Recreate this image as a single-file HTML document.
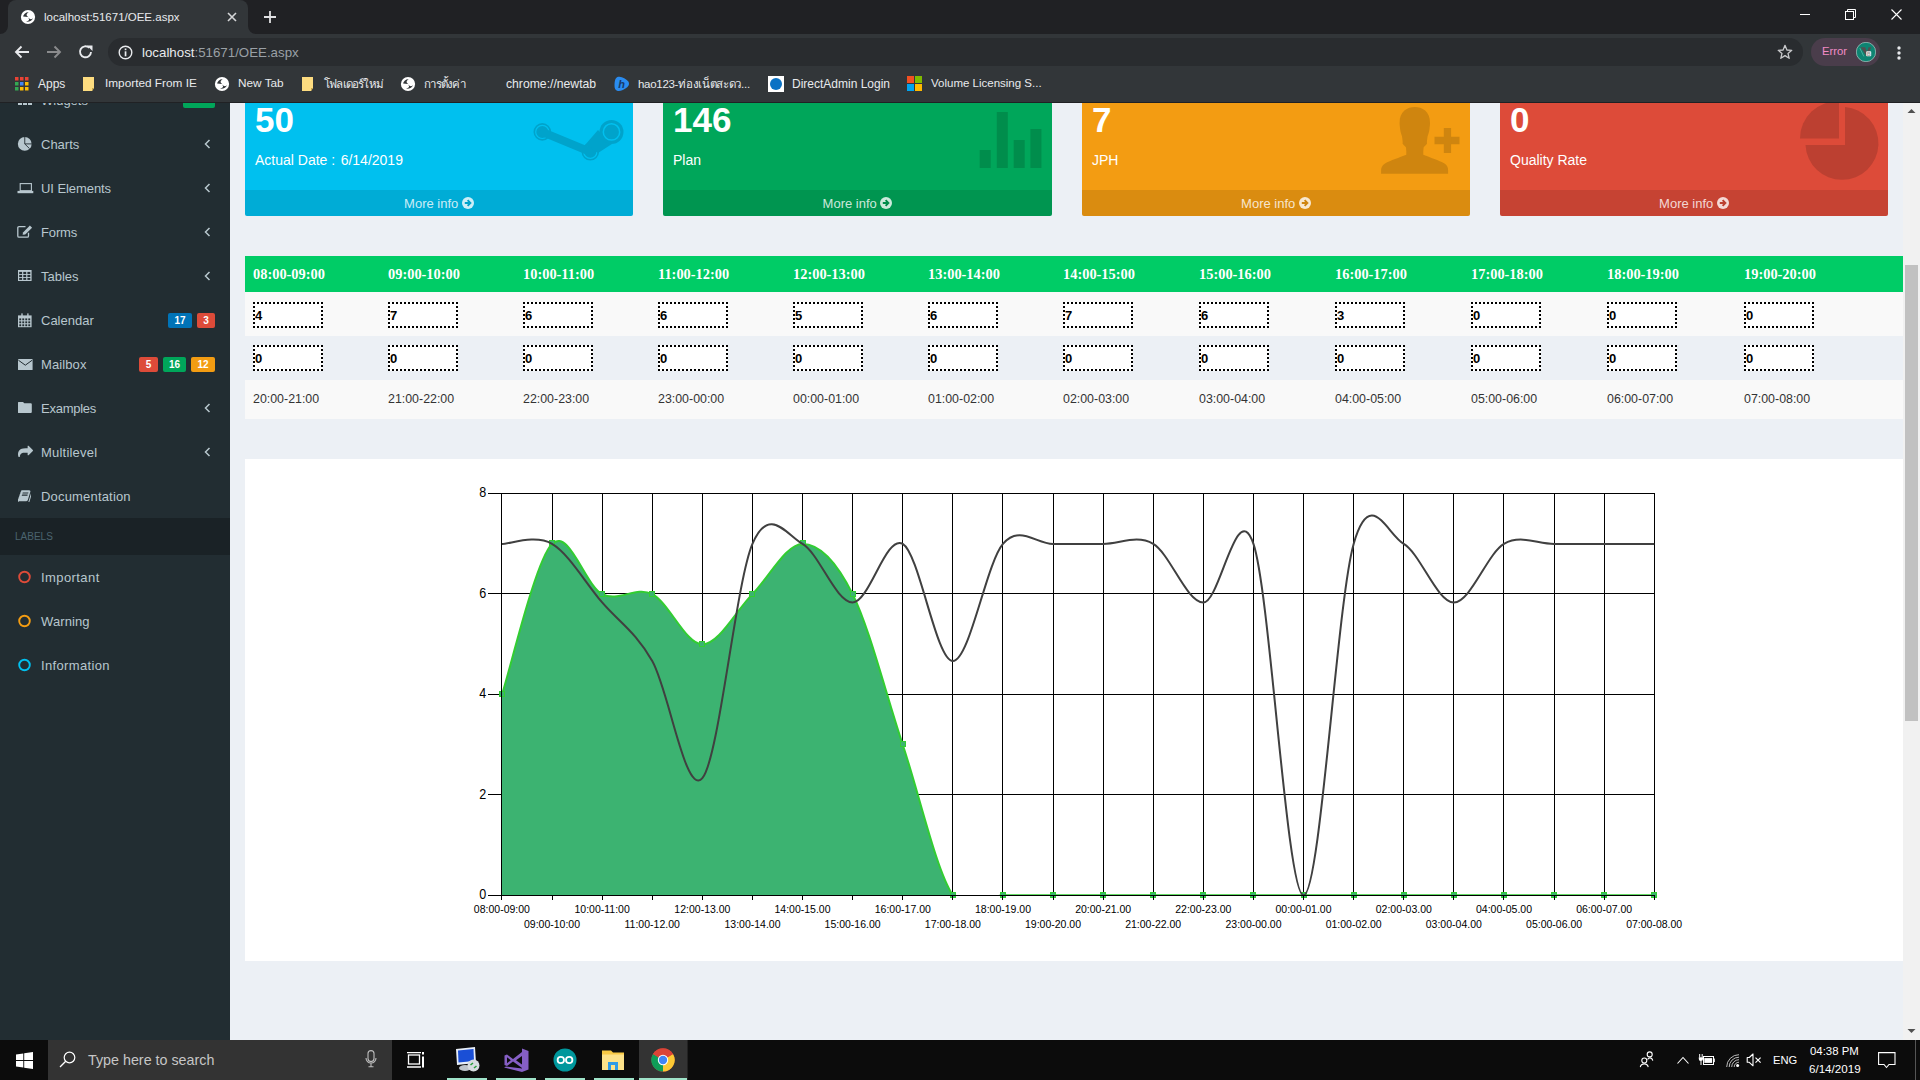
<!DOCTYPE html><html><head><meta charset="utf-8"><title>OEE</title><style>
*{box-sizing:border-box}
html,body{margin:0;padding:0;width:1920px;height:1080px;overflow:hidden;font-family:'Liberation Sans', sans-serif;}
body{position:relative;background:#ecf0f5}
.a{position:absolute}
.t{position:absolute;white-space:nowrap;line-height:1}
</style></head><body><div class="a" style="left:0;top:0;width:1920px;height:34px;background:#202124"></div><div class="a" style="left:0;top:34px;width:1920px;height:68px;background:#323639"></div><div class="a" style="left:0;top:102px;width:1920px;height:1px;background:#202124"></div><div class="a" style="left:8px;top:0;width:240px;height:34px;background:#323639;border-radius:8px 8px 0 0"></div><svg class="a" style="left:0;top:26px" width="8" height="8"><path d="M8 0 A8 8 0 0 1 0 8 L8 8Z" fill="#323639"/></svg><svg class="a" style="left:248px;top:26px" width="8" height="8"><path d="M0 0 A8 8 0 0 0 8 8 L0 8Z" fill="#323639"/></svg><svg class="a" style="left:20px;top:9px" width="16" height="16" viewBox="0 0 16 16"><circle cx="8" cy="8" r="7.1" fill="#ffffff"/><path d="M3.1 7.6 C3.3 5.5 5.2 3.3 8.8 2.9 C7.2 4 6.4 5.2 6.6 6.3 C6.9 7.1 7.6 7.6 8.2 8.1 C6.8 8.2 4.9 7.8 3.1 7.6Z" fill="#323639"/><path d="M6.2 12.7 C9.6 13 12.5 11.5 12.9 8.9 C12.1 10 11.1 10.4 10.2 10.1 C9.3 9.8 8.6 8.9 8.0 8.3 C8.7 9.5 9.4 10.6 9.0 11.1 C8.4 11.8 7.3 12.2 6.2 12.7Z" fill="#323639"/></svg><div class="t" style="left:44px;top:12px;font-size:11.5px;color:#e8eaed">localhost:51671/OEE.aspx</div><svg class="a" style="left:226px;top:11px" width="12" height="12" viewBox="0 0 12 12"><path d="M2 2 L10 10 M10 2 L2 10" stroke="#d5d6d8" stroke-width="1.6"/></svg><svg class="a" style="left:263px;top:10px" width="14" height="14" viewBox="0 0 14 14"><path d="M7 1 V13 M1 7 H13" stroke="#e0e1e3" stroke-width="1.8"/></svg><div class="a" style="left:1800px;top:14px;width:10px;height:1px;background:#fff"></div><svg class="a" style="left:1845px;top:9px" width="12" height="11" viewBox="0 0 12 11"><rect x="0.5" y="2.5" width="8" height="8" fill="none" stroke="#fff"/><path d="M2.5 2.5 V0.5 H10.5 V8.5 H8.5" fill="none" stroke="#fff"/></svg><svg class="a" style="left:1891px;top:9px" width="11" height="11" viewBox="0 0 11 11"><path d="M0.5 0.5 L10.5 10.5 M10.5 0.5 L0.5 10.5" stroke="#fff" stroke-width="1.1"/></svg><svg class="a" style="left:14px;top:45px" width="16" height="14" viewBox="0 0 16 14"><path d="M15 7 H2.5 M7.5 1.5 L2 7 L7.5 12.5" fill="none" stroke="#e8eaed" stroke-width="1.9"/></svg><svg class="a" style="left:46px;top:45px" width="16" height="14" viewBox="0 0 16 14"><path d="M1 7 H13.5 M8.5 1.5 L14 7 L8.5 12.5" fill="none" stroke="#8a8b8d" stroke-width="1.9"/></svg><svg class="a" style="left:78px;top:44px" width="16" height="16" viewBox="0 0 16 16"><path d="M13 8 A5.5 5.5 0 1 1 11.3 3.8" fill="none" stroke="#e8eaed" stroke-width="1.9"/><path d="M9 1.5 H14.5 V7 Z" fill="#e8eaed"/></svg><div class="a" style="left:108px;top:38px;width:1695px;height:28px;border-radius:14px;background:#292c2f"></div><svg class="a" style="left:118px;top:45px" width="15" height="15" viewBox="0 0 15 15"><circle cx="7.5" cy="7.5" r="6.3" fill="none" stroke="#e8eaed" stroke-width="1.4"/><rect x="6.7" y="6.3" width="1.7" height="5" fill="#e8eaed"/><rect x="6.7" y="3.5" width="1.7" height="1.7" fill="#e8eaed"/></svg><div class="t" style="left:142px;top:46px;font-size:13.3px;color:#e8eaed">localhost<span style="color:#9aa0a6">:51671/OEE.aspx</span></div><svg class="a" style="left:1777px;top:44px" width="16" height="16" viewBox="0 0 16 16"><path d="M8 1.3 L9.9 6 L14.8 6.3 L11 9.4 L12.2 14.3 L8 11.6 L3.8 14.3 L5 9.4 L1.2 6.3 L6.1 6Z" fill="none" stroke="#c8c9cb" stroke-width="1.3" stroke-linejoin="round"/></svg><div class="a" style="left:1811px;top:38px;width:69px;height:28px;border-radius:14px;background:#4a3d4b"></div><div class="t" style="left:1822px;top:46px;font-size:11.3px;color:#f28bc6">Error</div><svg class="a" style="left:1856px;top:42px" width="20" height="20" viewBox="0 0 20 20"><circle cx="10" cy="10" r="9.7" fill="#0e8472" stroke="#bfe3da" stroke-width="0.6"/><path d="M4.6 5.2 H9.2 L11 10 L12.6 5.2 H15.4 L10.6 14.5 Z" fill="#505050"/><path d="M3.8 6 L7.8 14.4" stroke="#5fc0ad" stroke-width="0.7"/><rect x="10.2" y="9.2" width="5" height="5" rx="0.8" fill="#f2f2f2"/><text x="12.7" y="13.5" font-size="5" font-family="Liberation Sans" font-weight="bold" text-anchor="middle" fill="#999">B</text></svg><svg class="a" style="left:1895.5px;top:44.5px" width="6" height="16" viewBox="0 0 6 16"><circle cx="3" cy="3" r="1.7" fill="#e8eaed"/><circle cx="3" cy="8" r="1.7" fill="#e8eaed"/><circle cx="3" cy="13" r="1.7" fill="#e8eaed"/></svg><svg class="a" style="left:15px;top:77px" width="14" height="14" viewBox="0 0 14 14"><rect x="0" y="0" width="3.5" height="3.5" fill="#ea4335"/><rect x="5" y="0" width="3.5" height="3.5" fill="#ea4335"/><rect x="10" y="0" width="3.5" height="3.5" fill="#ea4335"/><rect x="0" y="5" width="3.5" height="3.5" fill="#34a853"/><rect x="5" y="5" width="3.5" height="3.5" fill="#4285f4"/><rect x="10" y="5" width="3.5" height="3.5" fill="#fbbc05"/><rect x="0" y="10" width="3.5" height="3.5" fill="#34a853"/><rect x="5" y="10" width="3.5" height="3.5" fill="#fbbc05"/><rect x="10" y="10" width="3.5" height="3.5" fill="#fbbc05"/></svg><div class="t" style="left:38px;top:78px;font-size:12px;color:#e8eaed">Apps</div><svg class="a" style="left:83px;top:77px" width="13" height="14" viewBox="0 0 13 14"><path d="M0 0 H11 V11 L9 14 H0Z" fill="#fddc80"/><path d="M9 14 V11 H11Z" fill="#c9a64a"/></svg><div class="t" style="left:105px;top:78px;font-size:11.8px;color:#e8eaed">Imported From IE</div><svg class="a" style="left:214px;top:76px" width="16" height="16" viewBox="0 0 16 16"><circle cx="8" cy="8" r="7.1" fill="#ffffff"/><path d="M3.1 7.6 C3.3 5.5 5.2 3.3 8.8 2.9 C7.2 4 6.4 5.2 6.6 6.3 C6.9 7.1 7.6 7.6 8.2 8.1 C6.8 8.2 4.9 7.8 3.1 7.6Z" fill="#323639"/><path d="M6.2 12.7 C9.6 13 12.5 11.5 12.9 8.9 C12.1 10 11.1 10.4 10.2 10.1 C9.3 9.8 8.6 8.9 8.0 8.3 C8.7 9.5 9.4 10.6 9.0 11.1 C8.4 11.8 7.3 12.2 6.2 12.7Z" fill="#323639"/></svg><div class="t" style="left:238px;top:78px;font-size:11.8px;color:#e8eaed">New Tab</div><svg class="a" style="left:302px;top:77px" width="13" height="14" viewBox="0 0 13 14"><path d="M0 0 H11 V11 L9 14 H0Z" fill="#fddc80"/><path d="M9 14 V11 H11Z" fill="#c9a64a"/></svg><div class="t" style="left:324px;top:79px;font-size:11.5px;color:#e8eaed;letter-spacing:-0.8px">โฟลเดอร์ใหม่</div><svg class="a" style="left:400px;top:76px" width="16" height="16" viewBox="0 0 16 16"><circle cx="8" cy="8" r="7.1" fill="#ffffff"/><path d="M3.1 7.6 C3.3 5.5 5.2 3.3 8.8 2.9 C7.2 4 6.4 5.2 6.6 6.3 C6.9 7.1 7.6 7.6 8.2 8.1 C6.8 8.2 4.9 7.8 3.1 7.6Z" fill="#323639"/><path d="M6.2 12.7 C9.6 13 12.5 11.5 12.9 8.9 C12.1 10 11.1 10.4 10.2 10.1 C9.3 9.8 8.6 8.9 8.0 8.3 C8.7 9.5 9.4 10.6 9.0 11.1 C8.4 11.8 7.3 12.2 6.2 12.7Z" fill="#323639"/></svg><div class="t" style="left:424px;top:79px;font-size:11.5px;color:#e8eaed;letter-spacing:-0.75px">การตั้งค่า</div><div class="t" style="left:506px;top:78px;font-size:12.2px;color:#e8eaed">chrome://newtab</div><svg class="a" style="left:614px;top:76px" width="16" height="16" viewBox="0 0 16 16"><path d="M4 0.8 C7.5 0 12 2.5 14.2 5.3 C15.6 7.3 15.3 9.6 13.2 11.2 C10.2 13.6 6.5 15.4 3.8 15 C1.2 14.6 0.4 12.2 0.5 9 C0.7 5.5 1 1.6 4 0.8Z" fill="#2a8cf0"/><text x="7.6" y="12.3" font-size="11" font-style="italic" font-weight="bold" font-family="Liberation Sans" fill="#183a6a" text-anchor="middle">h</text></svg><div class="t" style="left:638px;top:79px;font-size:11.5px;color:#e8eaed;letter-spacing:-0.3px">hao123-ท่องเน็ตสะดว...</div><svg class="a" style="left:768px;top:76px" width="16" height="16" viewBox="0 0 16 16"><rect width="16" height="16" fill="#fff"/><circle cx="8" cy="8" r="6" fill="#0b72c4"/></svg><div class="t" style="left:792px;top:78px;font-size:12px;color:#e8eaed">DirectAdmin Login</div><svg class="a" style="left:907px;top:76px" width="15" height="15" viewBox="0 0 15 15"><rect x="0" y="0" width="7" height="7" fill="#f25022"/><rect x="8" y="0" width="7" height="7" fill="#7fba00"/><rect x="0" y="8" width="7" height="7" fill="#00a4ef"/><rect x="8" y="8" width="7" height="7" fill="#ffb900"/></svg><div class="t" style="left:931px;top:78px;font-size:11.5px;color:#e8eaed">Volume Licensing S...</div><div class="a" style="left:0;top:103px;width:1920px;height:937px;overflow:hidden" id="vp"><div class="a" style="left:0;top:0;width:230px;height:937px;background:#222d32"></div><div class="t" style="left:41px;top:-9.5px;font-size:13px;color:#b8c7ce;letter-spacing:0px">Widgets</div><svg class="a" style="left:18px;top:-10px" width="14" height="14" viewBox="0 0 14 14"><rect x="0" y="0" width="4" height="3" fill="#b8c7ce"/><rect x="5" y="0" width="4" height="3" fill="#b8c7ce"/><rect x="10" y="0" width="4" height="3" fill="#b8c7ce"/><rect x="0" y="4.5" width="4" height="3" fill="#b8c7ce"/><rect x="5" y="4.5" width="4" height="3" fill="#b8c7ce"/><rect x="10" y="4.5" width="4" height="3" fill="#b8c7ce"/><rect x="0" y="9" width="4" height="3" fill="#b8c7ce"/><rect x="5" y="9" width="4" height="3" fill="#b8c7ce"/><rect x="10" y="9" width="4" height="3" fill="#b8c7ce"/></svg><div class="a" style="left:183px;top:-10px;width:32px;height:15px;border-radius:2px;background:#00a65a;color:#fff;font:bold 10px 'Liberation Sans', sans-serif;line-height:15px;text-align:center"></div><div class="t" style="left:41px;top:34.5px;font-size:13px;color:#b8c7ce;letter-spacing:0px">Charts</div><svg class="a" style="left:17px;top:33px" width="16" height="16" viewBox="0 0 16 16"><circle cx="7.75" cy="7.9" r="6.9" fill="#b8c7ce"/><path d="M7.75 7.9 V0.5 M7.75 7.9 H15 M7.75 7.9 L12.6 12.7" stroke="#222d32" stroke-width="0.9" fill="none"/></svg><svg class="a" style="left:204px;top:36px" width="7" height="10" viewBox="0 0 7 10"><path d="M5.5 1 L1.5 5 L5.5 9" fill="none" stroke="#b8c7ce" stroke-width="1.5"/></svg><div class="t" style="left:41px;top:78.5px;font-size:13px;color:#b8c7ce;letter-spacing:-0.07px">UI Elements</div><svg class="a" style="left:17px;top:78px" width="17" height="14" viewBox="0 0 17 14"><rect x="3.2" y="2.6" width="11.2" height="7.1" fill="none" stroke="#b8c7ce" stroke-width="1.1"/><rect x="0.5" y="9.9" width="15.8" height="2.3" fill="#b8c7ce"/></svg><svg class="a" style="left:204px;top:80px" width="7" height="10" viewBox="0 0 7 10"><path d="M5.5 1 L1.5 5 L5.5 9" fill="none" stroke="#b8c7ce" stroke-width="1.5"/></svg><div class="t" style="left:41px;top:122.5px;font-size:13px;color:#b8c7ce;letter-spacing:-0.14px">Forms</div><svg class="a" style="left:17px;top:122px" width="16" height="14" viewBox="0 0 16 14"><path d="M8.5 1.6 H2 A1.2 1.2 0 0 0 0.8 2.8 V11 A1.2 1.2 0 0 0 2 12.2 H10.3 A1.2 1.2 0 0 0 11.5 11 V7.8" fill="none" stroke="#b8c7ce" stroke-width="1.3"/><path d="M5.6 9.7 L6 7.4 L12.9 0.5 L15.1 2.7 L8.2 9.4Z" fill="#b8c7ce"/></svg><svg class="a" style="left:204px;top:124px" width="7" height="10" viewBox="0 0 7 10"><path d="M5.5 1 L1.5 5 L5.5 9" fill="none" stroke="#b8c7ce" stroke-width="1.5"/></svg><div class="t" style="left:41px;top:166.5px;font-size:13px;color:#b8c7ce;letter-spacing:0px">Tables</div><svg class="a" style="left:18px;top:167px" width="14" height="12" viewBox="0 0 14 12"><rect x="0" y="0" width="13.6" height="11" fill="#b8c7ce"/><rect x="1.2" y="1.9" width="2.9" height="2.2" fill="#222d32"/><rect x="5.3" y="1.9" width="2.9" height="2.2" fill="#222d32"/><rect x="9.4" y="1.9" width="2.9" height="2.2" fill="#222d32"/><rect x="1.2" y="5.0" width="2.9" height="2.0" fill="#222d32"/><rect x="5.3" y="5.0" width="2.9" height="2.0" fill="#222d32"/><rect x="9.4" y="5.0" width="2.9" height="2.0" fill="#222d32"/><rect x="1.2" y="7.9" width="2.9" height="2.0" fill="#222d32"/><rect x="5.3" y="7.9" width="2.9" height="2.0" fill="#222d32"/><rect x="9.4" y="7.9" width="2.9" height="2.0" fill="#222d32"/></svg><svg class="a" style="left:204px;top:168px" width="7" height="10" viewBox="0 0 7 10"><path d="M5.5 1 L1.5 5 L5.5 9" fill="none" stroke="#b8c7ce" stroke-width="1.5"/></svg><div class="t" style="left:41px;top:210.5px;font-size:13px;color:#b8c7ce;letter-spacing:0px">Calendar</div><svg class="a" style="left:18px;top:210px" width="14" height="15" viewBox="0 0 14 15"><rect x="0" y="2.4" width="13.6" height="11.8" fill="#b8c7ce"/><rect x="1.3" y="5.4" width="1.9" height="1.9" fill="#222d32"/><rect x="4.3" y="5.4" width="1.9" height="1.9" fill="#222d32"/><rect x="7.3" y="5.4" width="1.9" height="1.9" fill="#222d32"/><rect x="10.3" y="5.4" width="1.9" height="1.9" fill="#222d32"/><rect x="1.3" y="8.350000000000001" width="1.9" height="1.9" fill="#222d32"/><rect x="4.3" y="8.350000000000001" width="1.9" height="1.9" fill="#222d32"/><rect x="7.3" y="8.350000000000001" width="1.9" height="1.9" fill="#222d32"/><rect x="10.3" y="8.350000000000001" width="1.9" height="1.9" fill="#222d32"/><rect x="1.3" y="11.3" width="1.9" height="1.9" fill="#222d32"/><rect x="4.3" y="11.3" width="1.9" height="1.9" fill="#222d32"/><rect x="7.3" y="11.3" width="1.9" height="1.9" fill="#222d32"/><rect x="10.3" y="11.3" width="1.9" height="1.9" fill="#222d32"/><rect x="3.3" y="0.2" width="1.4" height="3.4" rx="0.6" fill="#b8c7ce"/><rect x="9.2" y="0.2" width="1.4" height="3.4" rx="0.6" fill="#b8c7ce"/></svg><div class="a" style="left:168px;top:210px;width:24px;height:15px;border-radius:2px;background:#0073b7;color:#fff;font:bold 10px 'Liberation Sans', sans-serif;line-height:15px;text-align:center">17</div><div class="a" style="left:197px;top:210px;width:18px;height:15px;border-radius:2px;background:#dd4b39;color:#fff;font:bold 10px 'Liberation Sans', sans-serif;line-height:15px;text-align:center">3</div><div class="t" style="left:41px;top:254.5px;font-size:13px;color:#b8c7ce;letter-spacing:0.11px">Mailbox</div><svg class="a" style="left:18px;top:254px" width="15" height="14" viewBox="0 0 15 14"><rect x="0" y="2" width="14.6" height="11" rx="0.6" fill="#b8c7ce"/><path d="M0.4 3.2 L7.3 8.2 L14.2 3.2" fill="none" stroke="#222d32" stroke-width="1"/></svg><div class="a" style="left:139px;top:254px;width:19px;height:15px;border-radius:2px;background:#dd4b39;color:#fff;font:bold 10px 'Liberation Sans', sans-serif;line-height:15px;text-align:center">5</div><div class="a" style="left:163px;top:254px;width:23px;height:15px;border-radius:2px;background:#00a65a;color:#fff;font:bold 10px 'Liberation Sans', sans-serif;line-height:15px;text-align:center">16</div><div class="a" style="left:191px;top:254px;width:24px;height:15px;border-radius:2px;background:#f39c12;color:#fff;font:bold 10px 'Liberation Sans', sans-serif;line-height:15px;text-align:center">12</div><div class="t" style="left:41px;top:298.5px;font-size:13px;color:#b8c7ce;letter-spacing:-0.25px">Examples</div><svg class="a" style="left:18px;top:298px" width="14" height="14" viewBox="0 0 14 14"><path d="M-0.2 1.9 A1 1 0 0 1 0.8 0.9 H5 L6.3 2.3 H12.8 A1 1 0 0 1 13.8 3.3 V11.1 A1 1 0 0 1 12.8 12.1 H0.8 A1 1 0 0 1 -0.2 11.1Z" fill="#b8c7ce"/></svg><svg class="a" style="left:204px;top:300px" width="7" height="10" viewBox="0 0 7 10"><path d="M5.5 1 L1.5 5 L5.5 9" fill="none" stroke="#b8c7ce" stroke-width="1.5"/></svg><div class="t" style="left:41px;top:342.5px;font-size:13px;color:#b8c7ce;letter-spacing:0.21px">Multilevel</div><svg class="a" style="left:17.5px;top:341px" width="15" height="13" viewBox="0 0 1792 1536"><path transform="translate(0,1408) scale(1,-1)" d="M1792 640q0 26-19 45l-512 512q-19 19-45 19t-45-19-19-45v-256h-224q-713 0-875-403-53-134-53-333 0-166 127-451 3-7 10.5-24t13.5-30 13-22q12-17 28-17 15 0 23.5 10t8.5 25q0 9-2.5 26.5t-2.5 23.5q-5 68-5 123 0 101 17.5 181t48.5 138.5 80 101 105.5 69.5 133 42.5 154 21.5 175.5 6h224v-256q0-26 19-45t45-19 45 19l512 512q19 19 19 45z" fill="#b8c7ce"/></svg><svg class="a" style="left:204px;top:344px" width="7" height="10" viewBox="0 0 7 10"><path d="M5.5 1 L1.5 5 L5.5 9" fill="none" stroke="#b8c7ce" stroke-width="1.5"/></svg><div class="t" style="left:41px;top:386.5px;font-size:13px;color:#b8c7ce;letter-spacing:0.18px">Documentation</div><svg class="a" style="left:18px;top:386.6px" width="13.3" height="12.4" viewBox="50 100 1560 1450"><path fill="#b8c7ce" d="M1639 478q40 57 18 129l-275 906q-19 64-76.5 107.5t-122.5 43.5h-923q-77 0-148.5-53.5t-99.5-131.5q-24-67-2-127 0-4 3-27t4-37q1-8-3-21.5t-3-19.5q2-11 8-21t16.5-23.5 16.5-23.5q23-38 45-91.5t30-91.5q3-10 .5-30t-.5-28q3-11 17-28t17-23q21-36 42-92t25-90q1-9-2.5-32t.5-28q4-13 22-30.5t22-22.5q19-26 42.5-84.5t27.5-96.5q1-8-3-25.5t-2-26.5q2-8 9-18t18-23 17-21q8-12 16.5-30.5t15-35 16-36 19.5-32 26.5-23.5 36-11.5 47.5 5.5l-1 3q38-9 51-9h761q74 0 114 56t18 130l-274 906q-36 119-71.5 153.5t-128.5 34.5h-869q-27 0-38 15-11 16-1 43 24 70 144 70h923q29 0 56-15.5t35-41.5l300-987q7-22 5-57 38 15 59 43zm-1064 2q-4 13 2 22.5t20 9.5h608q13 0 25.5-9.5t16.5-22.5l21-64q4-13-2-22.5t-20-9.5h-608q-13 0-25.5 9.5t-16.5 22.5zm-83 256q-4 13 2 22.5t20 9.5h608q13 0 25.5-9.5t16.5-22.5l21-64q4-13-2-22.5t-20-9.5h-608q-13 0-25.5 9.5t-16.5 22.5z"/></svg><div class="a" style="left:0;top:415px;width:230px;height:37px;background:#1a2226"></div><div class="t" style="left:15px;top:429px;font-size:10px;color:#4b646f">LABELS</div><div class="t" style="left:41px;top:467.5px;font-size:13px;color:#b8c7ce;letter-spacing:0.42px">Important</div><svg class="a" style="left:18px;top:467px" width="14" height="14" viewBox="0 0 14 14"><circle cx="6.5" cy="7" r="5.3" fill="none" stroke="#dd4b39" stroke-width="1.9"/></svg><div class="t" style="left:41px;top:511.5px;font-size:13px;color:#b8c7ce;letter-spacing:0.1px">Warning</div><svg class="a" style="left:18px;top:511px" width="14" height="14" viewBox="0 0 14 14"><circle cx="6.5" cy="7" r="5.3" fill="none" stroke="#f39c12" stroke-width="1.9"/></svg><div class="t" style="left:41px;top:555.5px;font-size:13px;color:#b8c7ce;letter-spacing:0.34px">Information</div><svg class="a" style="left:18px;top:555px" width="14" height="14" viewBox="0 0 14 14"><circle cx="6.5" cy="7" r="5.3" fill="none" stroke="#00c0ef" stroke-width="1.9"/></svg><div class="a" style="left:1903px;top:0;width:17px;height:937px;background:#f1f1f1"></div><svg class="a" style="left:1907px;top:5px" width="9" height="6" viewBox="0 0 9 6"><path d="M0.5 5 L4.5 1 L8.5 5Z" fill="#505050"/></svg><svg class="a" style="left:1907px;top:925px" width="9" height="6" viewBox="0 0 9 6"><path d="M0.5 1 L4.5 5 L8.5 1Z" fill="#505050"/></svg><div class="a" style="left:1905px;top:162px;width:13px;height:456px;background:#c1c1c1"></div><div class="a" style="left:245px;top:-6px;width:388px;height:119px;background:#00c0ef;border-radius:2px;overflow:hidden"><svg class="a" style="left:285px;top:20px" width="96" height="47" viewBox="0 0 96 47"><circle cx="12.3" cy="14.9" r="8.8" fill="#00a3cb"/><circle cx="12.3" cy="14.9" r="6.6" fill="none" stroke="#00c0ef" stroke-width="1.2"/><circle cx="60.3" cy="34.8" r="8.8" fill="#00a3cb"/><circle cx="60.3" cy="34.8" r="6.6" fill="none" stroke="#00c0ef" stroke-width="1.2"/><path d="M55 28 L68 13 L82 27 L68 36Z" fill="#00a3cb"/><circle cx="81.5" cy="14.9" r="12" fill="#00a3cb"/><circle cx="81.5" cy="14.9" r="8.2" fill="none" stroke="#00c0ef" stroke-width="1.5"/><path d="M13.5 15.5 L59.5 34.5" stroke="#00a3cb" stroke-width="8" stroke-linecap="round"/></svg><div class="t" style="left:10px;top:5px;font:bold 35px 'Liberation Sans', sans-serif;color:#fff;line-height:35px">50</div><div class="t" style="left:10px;top:55.5px;font-size:14px;color:#fff">Actual Date :<span style="margin-left:5.5px"></span>6/14/2019</div><div class="a" style="left:0;top:93px;width:388px;height:26px;background:rgba(0,0,0,0.1)"></div><div class="t" style="left:0;top:99.5px;width:388px;text-align:center;font-size:13px;color:rgba(255,255,255,0.8)">More info <svg width="12" height="12" viewBox="0 0 12 12" style="vertical-align:-1px"><circle cx="6" cy="6" r="6" fill="rgba(255,255,255,0.8)"/><path d="M2.8 6 H8.2 M5.6 3.2 L8.4 6 L5.6 8.8" fill="none" stroke="#00a3cb" stroke-width="1.9"/></svg></div></div><div class="a" style="left:663px;top:-6px;width:389px;height:119px;background:#00a65a;border-radius:2px;overflow:hidden"><svg class="a" style="left:316px;top:14px" width="63" height="58" viewBox="0 0 63 58"><rect x="0.7" y="39" width="11" height="18" fill="#008d4c"/><rect x="17.8" y="1" width="11" height="56" fill="#008d4c"/><rect x="34.7" y="29" width="11" height="28" fill="#008d4c"/><rect x="51.4" y="18" width="11" height="39" fill="#008d4c"/></svg><div class="t" style="left:10px;top:5px;font:bold 35px 'Liberation Sans', sans-serif;color:#fff;line-height:35px">146</div><div class="t" style="left:10px;top:55.5px;font-size:14px;color:#fff">Plan</div><div class="a" style="left:0;top:93px;width:389px;height:26px;background:rgba(0,0,0,0.1)"></div><div class="t" style="left:0;top:99.5px;width:389px;text-align:center;font-size:13px;color:rgba(255,255,255,0.8)">More info <svg width="12" height="12" viewBox="0 0 12 12" style="vertical-align:-1px"><circle cx="6" cy="6" r="6" fill="rgba(255,255,255,0.8)"/><path d="M2.8 6 H8.2 M5.6 3.2 L8.4 6 L5.6 8.8" fill="none" stroke="#008d4c" stroke-width="1.9"/></svg></div></div><div class="a" style="left:1082px;top:-6px;width:388px;height:119px;background:#f39c12;border-radius:2px;overflow:hidden"><svg class="a" style="left:299px;top:9px" width="80" height="70" viewBox="0 0 80 70"><path d="M33.8 1 C41 1 49.2 5 49 17 C49 19.5 48.6 21 48.5 22.9 C48.2 25.5 47.2 28.5 46.6 30.3 C46.2 33.5 45.7 36 46 37.7 C44.5 39.5 43 40.5 42.6 41.4 C42.2 44 42.3 46.5 42.3 48.8 C49 51.5 58 54.5 63.5 57.5 C66.5 59.5 67.1 62 67.1 64 V67.7 H0.1 V64 C0.1 62 1 59.5 4 57.5 C9.5 54.5 18.5 51.5 25.3 48.8 C25.3 46.5 25.4 44 25 41.4 C24.6 40.5 23.1 39.5 21.6 37.7 C21.9 36 21.4 33.5 21 30.3 C20.4 28.5 19.4 25.5 19.1 22.9 C19 21 18.6 19.5 18.6 17 C18.4 5 26.6 1 33.8 1Z" fill="#cf850f"/><rect x="53.5" y="30.75" width="25" height="7.5" fill="#cf850f"/><rect x="62.8" y="22" width="7.3" height="25" fill="#cf850f"/></svg><div class="t" style="left:10px;top:5px;font:bold 35px 'Liberation Sans', sans-serif;color:#fff;line-height:35px">7</div><div class="t" style="left:10px;top:55.5px;font-size:14px;color:#fff">JPH</div><div class="a" style="left:0;top:93px;width:388px;height:26px;background:rgba(0,0,0,0.1)"></div><div class="t" style="left:0;top:99.5px;width:388px;text-align:center;font-size:13px;color:rgba(255,255,255,0.8)">More info <svg width="12" height="12" viewBox="0 0 12 12" style="vertical-align:-1px"><circle cx="6" cy="6" r="6" fill="rgba(255,255,255,0.8)"/><path d="M2.8 6 H8.2 M5.6 3.2 L8.4 6 L5.6 8.8" fill="none" stroke="#cf850f" stroke-width="1.9"/></svg></div></div><div class="a" style="left:1500px;top:-6px;width:388px;height:119px;background:#dd4b39;border-radius:2px;overflow:hidden"><svg class="a" style="left:295px;top:1px" width="90" height="85" viewBox="0 0 90 85"><path d="M44 3.5 A37 37 0 0 0 5 40.5 L44 40.5Z" fill="#bc4031"/><path d="M50 9 A36.5 36.5 0 1 1 10.5 47 L50 47Z" fill="#bc4031"/></svg><div class="t" style="left:10px;top:5px;font:bold 35px 'Liberation Sans', sans-serif;color:#fff;line-height:35px">0</div><div class="t" style="left:10px;top:55.5px;font-size:14px;color:#fff">Quality Rate</div><div class="a" style="left:0;top:93px;width:388px;height:26px;background:rgba(0,0,0,0.1)"></div><div class="t" style="left:0;top:99.5px;width:388px;text-align:center;font-size:13px;color:rgba(255,255,255,0.8)">More info <svg width="12" height="12" viewBox="0 0 12 12" style="vertical-align:-1px"><circle cx="6" cy="6" r="6" fill="rgba(255,255,255,0.8)"/><path d="M2.8 6 H8.2 M5.6 3.2 L8.4 6 L5.6 8.8" fill="none" stroke="#bc4031" stroke-width="1.9"/></svg></div></div><div class="a" style="left:245px;top:153px;width:1658px;height:36px;background:#00cc66"></div><div class="a" style="left:245px;top:189px;width:1658px;height:44px;background:#f9f9f9"></div><div class="a" style="left:245px;top:277px;width:1658px;height:39px;background:#f9f9f9"></div><div class="t" style="left:253px;top:163px;font:bold 14.4px 'Liberation Serif', serif;color:#fff">08:00-09:00</div><div class="a" style="left:253px;top:199px;width:70px;height:26px;border:2px dotted #000;background:#fff"></div><div class="t" style="left:255px;top:204.8px;font:bold 13px 'Liberation Sans', sans-serif;color:#000">4</div><div class="a" style="left:253px;top:242px;width:70px;height:26px;border:2px dotted #000;background:#fff"></div><div class="t" style="left:255px;top:247.8px;font:bold 13px 'Liberation Sans', sans-serif;color:#000">0</div><div class="t" style="left:253px;top:290px;font-size:12.4px;color:#333">20:00-21:00</div><div class="t" style="left:388px;top:163px;font:bold 14.4px 'Liberation Serif', serif;color:#fff">09:00-10:00</div><div class="a" style="left:388px;top:199px;width:70px;height:26px;border:2px dotted #000;background:#fff"></div><div class="t" style="left:390px;top:204.8px;font:bold 13px 'Liberation Sans', sans-serif;color:#000">7</div><div class="a" style="left:388px;top:242px;width:70px;height:26px;border:2px dotted #000;background:#fff"></div><div class="t" style="left:390px;top:247.8px;font:bold 13px 'Liberation Sans', sans-serif;color:#000">0</div><div class="t" style="left:388px;top:290px;font-size:12.4px;color:#333">21:00-22:00</div><div class="t" style="left:523px;top:163px;font:bold 14.4px 'Liberation Serif', serif;color:#fff">10:00-11:00</div><div class="a" style="left:523px;top:199px;width:70px;height:26px;border:2px dotted #000;background:#fff"></div><div class="t" style="left:525px;top:204.8px;font:bold 13px 'Liberation Sans', sans-serif;color:#000">6</div><div class="a" style="left:523px;top:242px;width:70px;height:26px;border:2px dotted #000;background:#fff"></div><div class="t" style="left:525px;top:247.8px;font:bold 13px 'Liberation Sans', sans-serif;color:#000">0</div><div class="t" style="left:523px;top:290px;font-size:12.4px;color:#333">22:00-23:00</div><div class="t" style="left:658px;top:163px;font:bold 14.4px 'Liberation Serif', serif;color:#fff">11:00-12:00</div><div class="a" style="left:658px;top:199px;width:70px;height:26px;border:2px dotted #000;background:#fff"></div><div class="t" style="left:660px;top:204.8px;font:bold 13px 'Liberation Sans', sans-serif;color:#000">6</div><div class="a" style="left:658px;top:242px;width:70px;height:26px;border:2px dotted #000;background:#fff"></div><div class="t" style="left:660px;top:247.8px;font:bold 13px 'Liberation Sans', sans-serif;color:#000">0</div><div class="t" style="left:658px;top:290px;font-size:12.4px;color:#333">23:00-00:00</div><div class="t" style="left:793px;top:163px;font:bold 14.4px 'Liberation Serif', serif;color:#fff">12:00-13:00</div><div class="a" style="left:793px;top:199px;width:70px;height:26px;border:2px dotted #000;background:#fff"></div><div class="t" style="left:795px;top:204.8px;font:bold 13px 'Liberation Sans', sans-serif;color:#000">5</div><div class="a" style="left:793px;top:242px;width:70px;height:26px;border:2px dotted #000;background:#fff"></div><div class="t" style="left:795px;top:247.8px;font:bold 13px 'Liberation Sans', sans-serif;color:#000">0</div><div class="t" style="left:793px;top:290px;font-size:12.4px;color:#333">00:00-01:00</div><div class="t" style="left:928px;top:163px;font:bold 14.4px 'Liberation Serif', serif;color:#fff">13:00-14:00</div><div class="a" style="left:928px;top:199px;width:70px;height:26px;border:2px dotted #000;background:#fff"></div><div class="t" style="left:930px;top:204.8px;font:bold 13px 'Liberation Sans', sans-serif;color:#000">6</div><div class="a" style="left:928px;top:242px;width:70px;height:26px;border:2px dotted #000;background:#fff"></div><div class="t" style="left:930px;top:247.8px;font:bold 13px 'Liberation Sans', sans-serif;color:#000">0</div><div class="t" style="left:928px;top:290px;font-size:12.4px;color:#333">01:00-02:00</div><div class="t" style="left:1063px;top:163px;font:bold 14.4px 'Liberation Serif', serif;color:#fff">14:00-15:00</div><div class="a" style="left:1063px;top:199px;width:70px;height:26px;border:2px dotted #000;background:#fff"></div><div class="t" style="left:1065px;top:204.8px;font:bold 13px 'Liberation Sans', sans-serif;color:#000">7</div><div class="a" style="left:1063px;top:242px;width:70px;height:26px;border:2px dotted #000;background:#fff"></div><div class="t" style="left:1065px;top:247.8px;font:bold 13px 'Liberation Sans', sans-serif;color:#000">0</div><div class="t" style="left:1063px;top:290px;font-size:12.4px;color:#333">02:00-03:00</div><div class="t" style="left:1199px;top:163px;font:bold 14.4px 'Liberation Serif', serif;color:#fff">15:00-16:00</div><div class="a" style="left:1199px;top:199px;width:70px;height:26px;border:2px dotted #000;background:#fff"></div><div class="t" style="left:1201px;top:204.8px;font:bold 13px 'Liberation Sans', sans-serif;color:#000">6</div><div class="a" style="left:1199px;top:242px;width:70px;height:26px;border:2px dotted #000;background:#fff"></div><div class="t" style="left:1201px;top:247.8px;font:bold 13px 'Liberation Sans', sans-serif;color:#000">0</div><div class="t" style="left:1199px;top:290px;font-size:12.4px;color:#333">03:00-04:00</div><div class="t" style="left:1335px;top:163px;font:bold 14.4px 'Liberation Serif', serif;color:#fff">16:00-17:00</div><div class="a" style="left:1335px;top:199px;width:70px;height:26px;border:2px dotted #000;background:#fff"></div><div class="t" style="left:1337px;top:204.8px;font:bold 13px 'Liberation Sans', sans-serif;color:#000">3</div><div class="a" style="left:1335px;top:242px;width:70px;height:26px;border:2px dotted #000;background:#fff"></div><div class="t" style="left:1337px;top:247.8px;font:bold 13px 'Liberation Sans', sans-serif;color:#000">0</div><div class="t" style="left:1335px;top:290px;font-size:12.4px;color:#333">04:00-05:00</div><div class="t" style="left:1471px;top:163px;font:bold 14.4px 'Liberation Serif', serif;color:#fff">17:00-18:00</div><div class="a" style="left:1471px;top:199px;width:70px;height:26px;border:2px dotted #000;background:#fff"></div><div class="t" style="left:1473px;top:204.8px;font:bold 13px 'Liberation Sans', sans-serif;color:#000">0</div><div class="a" style="left:1471px;top:242px;width:70px;height:26px;border:2px dotted #000;background:#fff"></div><div class="t" style="left:1473px;top:247.8px;font:bold 13px 'Liberation Sans', sans-serif;color:#000">0</div><div class="t" style="left:1471px;top:290px;font-size:12.4px;color:#333">05:00-06:00</div><div class="t" style="left:1607px;top:163px;font:bold 14.4px 'Liberation Serif', serif;color:#fff">18:00-19:00</div><div class="a" style="left:1607px;top:199px;width:70px;height:26px;border:2px dotted #000;background:#fff"></div><div class="t" style="left:1609px;top:204.8px;font:bold 13px 'Liberation Sans', sans-serif;color:#000">0</div><div class="a" style="left:1607px;top:242px;width:70px;height:26px;border:2px dotted #000;background:#fff"></div><div class="t" style="left:1609px;top:247.8px;font:bold 13px 'Liberation Sans', sans-serif;color:#000">0</div><div class="t" style="left:1607px;top:290px;font-size:12.4px;color:#333">06:00-07:00</div><div class="t" style="left:1744px;top:163px;font:bold 14.4px 'Liberation Serif', serif;color:#fff">19:00-20:00</div><div class="a" style="left:1744px;top:199px;width:70px;height:26px;border:2px dotted #000;background:#fff"></div><div class="t" style="left:1746px;top:204.8px;font:bold 13px 'Liberation Sans', sans-serif;color:#000">0</div><div class="a" style="left:1744px;top:242px;width:70px;height:26px;border:2px dotted #000;background:#fff"></div><div class="t" style="left:1746px;top:247.8px;font:bold 13px 'Liberation Sans', sans-serif;color:#000">0</div><div class="t" style="left:1744px;top:290px;font-size:12.4px;color:#333">07:00-08:00</div><div class="a" style="left:245px;top:356px;width:1658px;height:502px;background:#fff"></div><svg class="a" style="left:0;top:0" width="1920" height="937" viewBox="0 103 1920 937"><path d="M488,493.5 H1654.5 M488,593.5 H1654.5 M488,694.5 H1654.5 M488,794.5 H1654.5 M552.5,493 V895 M602.5,493 V895 M652.5,493 V895 M702.5,493 V895 M752.5,493 V895 M802.5,493 V895 M852.5,493 V895 M902.5,493 V895 M952.5,493 V895 M1002.5,493 V895 M1053.5,493 V895 M1103.5,493 V895 M1153.5,493 V895 M1203.5,493 V895 M1253.5,493 V895 M1303.5,493 V895 M1353.5,493 V895 M1403.5,493 V895 M1453.5,493 V895 M1503.5,493 V895 M1554.5,493 V895 M1604.5,493 V895 M1654.5,493 V895 " stroke="#000" stroke-width="1" fill="none" shape-rendering="crispEdges"/><defs><clipPath id="pa"><rect x="501" y="490" width="1154" height="405.5"/></clipPath><clipPath id="pb"><rect x="495" y="480" width="1170" height="416"/></clipPath></defs><path clip-path="url(#pa)" d="M501.95,694.50 C510.30,669.40 535.35,560.63 552.05,543.90 C568.75,527.17 585.45,585.73 602.15,594.10 C618.85,602.47 635.55,585.73 652.25,594.10 C668.95,602.47 685.65,644.30 702.35,644.30 C719.05,644.30 735.75,610.83 752.45,594.10 C769.15,577.37 785.85,543.90 802.55,543.90 C819.25,543.90 835.95,560.63 852.65,594.10 C869.35,627.57 886.05,694.50 902.75,744.70 C919.45,794.90 936.15,870.20 952.85,895.30 C969.55,920.40 986.25,895.30 1002.95,895.30 C1019.65,895.30 1036.35,895.30 1053.05,895.30 C1069.75,895.30 1086.45,895.30 1103.15,895.30 C1119.85,895.30 1136.55,895.30 1153.25,895.30 C1169.95,895.30 1186.65,895.30 1203.35,895.30 C1220.05,895.30 1236.75,895.30 1253.45,895.30 C1270.15,895.30 1286.85,895.30 1303.55,895.30 C1320.25,895.30 1336.95,895.30 1353.65,895.30 C1370.35,895.30 1387.05,895.30 1403.75,895.30 C1420.45,895.30 1437.15,895.30 1453.85,895.30 C1470.55,895.30 1487.25,895.30 1503.95,895.30 C1520.65,895.30 1537.35,895.30 1554.05,895.30 C1570.75,895.30 1587.45,895.30 1604.15,895.30 C1620.85,895.30 1645.90,895.30 1654.25,895.30 L1654.25,895.5 L501.95,895.5Z" fill="#3cb371"/><path clip-path="url(#pb)" d="M501.95,694.50 C510.30,669.40 535.35,560.63 552.05,543.90 C568.75,527.17 585.45,585.73 602.15,594.10 C618.85,602.47 635.55,585.73 652.25,594.10 C668.95,602.47 685.65,644.30 702.35,644.30 C719.05,644.30 735.75,610.83 752.45,594.10 C769.15,577.37 785.85,543.90 802.55,543.90 C819.25,543.90 835.95,560.63 852.65,594.10 C869.35,627.57 886.05,694.50 902.75,744.70 C919.45,794.90 936.15,870.20 952.85,895.30 C969.55,920.40 986.25,895.30 1002.95,895.30 C1019.65,895.30 1036.35,895.30 1053.05,895.30 C1069.75,895.30 1086.45,895.30 1103.15,895.30 C1119.85,895.30 1136.55,895.30 1153.25,895.30 C1169.95,895.30 1186.65,895.30 1203.35,895.30 C1220.05,895.30 1236.75,895.30 1253.45,895.30 C1270.15,895.30 1286.85,895.30 1303.55,895.30 C1320.25,895.30 1336.95,895.30 1353.65,895.30 C1370.35,895.30 1387.05,895.30 1403.75,895.30 C1420.45,895.30 1437.15,895.30 1453.85,895.30 C1470.55,895.30 1487.25,895.30 1503.95,895.30 C1520.65,895.30 1537.35,895.30 1554.05,895.30 C1570.75,895.30 1587.45,895.30 1604.15,895.30 C1620.85,895.30 1645.90,895.30 1654.25,895.30" fill="none" stroke="#32cd32" stroke-width="2"/><rect x="499.5" y="691.5" width="5" height="5" fill="#3cb371" stroke="#32cd32" stroke-width="1"/><rect x="549.5" y="540.5" width="5" height="5" fill="#3cb371" stroke="#32cd32" stroke-width="1"/><rect x="599.5" y="591.5" width="5" height="5" fill="#3cb371" stroke="#32cd32" stroke-width="1"/><rect x="649.5" y="591.5" width="5" height="5" fill="#3cb371" stroke="#32cd32" stroke-width="1"/><rect x="699.5" y="641.5" width="5" height="5" fill="#3cb371" stroke="#32cd32" stroke-width="1"/><rect x="749.5" y="591.5" width="5" height="5" fill="#3cb371" stroke="#32cd32" stroke-width="1"/><rect x="800.5" y="540.5" width="5" height="5" fill="#3cb371" stroke="#32cd32" stroke-width="1"/><rect x="850.5" y="591.5" width="5" height="5" fill="#3cb371" stroke="#32cd32" stroke-width="1"/><rect x="900.5" y="741.5" width="5" height="5" fill="#3cb371" stroke="#32cd32" stroke-width="1"/><rect x="950.5" y="892.5" width="5" height="5" fill="#3cb371" stroke="#32cd32" stroke-width="1"/><rect x="1000.5" y="892.5" width="5" height="5" fill="#3cb371" stroke="#32cd32" stroke-width="1"/><rect x="1050.5" y="892.5" width="5" height="5" fill="#3cb371" stroke="#32cd32" stroke-width="1"/><rect x="1100.5" y="892.5" width="5" height="5" fill="#3cb371" stroke="#32cd32" stroke-width="1"/><rect x="1150.5" y="892.5" width="5" height="5" fill="#3cb371" stroke="#32cd32" stroke-width="1"/><rect x="1200.5" y="892.5" width="5" height="5" fill="#3cb371" stroke="#32cd32" stroke-width="1"/><rect x="1250.5" y="892.5" width="5" height="5" fill="#3cb371" stroke="#32cd32" stroke-width="1"/><rect x="1301.5" y="892.5" width="5" height="5" fill="#3cb371" stroke="#32cd32" stroke-width="1"/><rect x="1351.5" y="892.5" width="5" height="5" fill="#3cb371" stroke="#32cd32" stroke-width="1"/><rect x="1401.5" y="892.5" width="5" height="5" fill="#3cb371" stroke="#32cd32" stroke-width="1"/><rect x="1451.5" y="892.5" width="5" height="5" fill="#3cb371" stroke="#32cd32" stroke-width="1"/><rect x="1501.5" y="892.5" width="5" height="5" fill="#3cb371" stroke="#32cd32" stroke-width="1"/><rect x="1551.5" y="892.5" width="5" height="5" fill="#3cb371" stroke="#32cd32" stroke-width="1"/><rect x="1601.5" y="892.5" width="5" height="5" fill="#3cb371" stroke="#32cd32" stroke-width="1"/><rect x="1651.5" y="892.5" width="5" height="5" fill="#3cb371" stroke="#32cd32" stroke-width="1"/><path d="M501.95,543.90 C510.30,543.90 535.35,534.14 552.05,543.90 C568.75,553.66 585.45,582.94 602.15,602.47 C618.85,621.99 635.55,631.75 652.25,661.03 C668.95,690.32 685.65,797.69 702.35,778.17 C719.05,758.64 735.75,582.94 752.45,543.90 C769.15,504.86 785.85,534.14 802.55,543.90 C819.25,553.66 835.95,602.47 852.65,602.47 C869.35,602.47 886.05,534.14 902.75,543.90 C919.45,553.66 936.15,661.03 952.85,661.03 C969.55,661.03 986.25,563.42 1002.95,543.90 C1019.65,524.38 1036.35,543.90 1053.05,543.90 C1069.75,543.90 1086.45,543.90 1103.15,543.90 C1119.85,543.90 1136.55,534.14 1153.25,543.90 C1169.95,553.66 1186.65,602.47 1203.35,602.47 C1220.05,602.47 1236.75,495.09 1253.45,543.90 C1270.15,592.71 1286.85,895.30 1303.55,895.30 C1320.25,895.30 1336.95,602.47 1353.65,543.90 C1370.35,485.33 1387.05,534.14 1403.75,543.90 C1420.45,553.66 1437.15,602.47 1453.85,602.47 C1470.55,602.47 1487.25,553.66 1503.95,543.90 C1520.65,534.14 1537.35,543.90 1554.05,543.90 C1570.75,543.90 1587.45,543.90 1604.15,543.90 C1620.85,543.90 1645.90,543.90 1654.25,543.90" fill="none" stroke="#404040" stroke-width="2"/><path d="M488,895.5 H1654.5 M501.5,493 V899" stroke="#000" stroke-width="1" fill="none" shape-rendering="crispEdges"/><path d="M501.5,895 V899.5 M552.5,895 V899.5 M602.5,895 V899.5 M652.5,895 V899.5 M702.5,895 V899.5 M752.5,895 V899.5 M802.5,895 V899.5 M852.5,895 V899.5 M902.5,895 V899.5 M952.5,895 V899.5 M1002.5,895 V899.5 M1053.5,895 V899.5 M1103.5,895 V899.5 M1153.5,895 V899.5 M1203.5,895 V899.5 M1253.5,895 V899.5 M1303.5,895 V899.5 M1353.5,895 V899.5 M1403.5,895 V899.5 M1453.5,895 V899.5 M1503.5,895 V899.5 M1554.5,895 V899.5 M1604.5,895 V899.5 M1654.5,895 V899.5 " stroke="#000" stroke-width="1" fill="none" shape-rendering="crispEdges"/><text x="486.3" y="898.9" text-anchor="end" font-family="Liberation Sans" font-size="14" fill="#000" textLength="7" lengthAdjust="spacingAndGlyphs">0</text><text x="486.3" y="798.5" text-anchor="end" font-family="Liberation Sans" font-size="14" fill="#000" textLength="7" lengthAdjust="spacingAndGlyphs">2</text><text x="486.3" y="698.1" text-anchor="end" font-family="Liberation Sans" font-size="14" fill="#000" textLength="7" lengthAdjust="spacingAndGlyphs">4</text><text x="486.3" y="597.7" text-anchor="end" font-family="Liberation Sans" font-size="14" fill="#000" textLength="7" lengthAdjust="spacingAndGlyphs">6</text><text x="486.3" y="497.3" text-anchor="end" font-family="Liberation Sans" font-size="14" fill="#000" textLength="7" lengthAdjust="spacingAndGlyphs">8</text><text x="501.9" y="913" text-anchor="middle" font-family="Liberation Sans" font-size="10.5" fill="#000">08:00-09:00</text><text x="552.0" y="928" text-anchor="middle" font-family="Liberation Sans" font-size="10.5" fill="#000">09:00-10:00</text><text x="602.1" y="913" text-anchor="middle" font-family="Liberation Sans" font-size="10.5" fill="#000">10:00-11:00</text><text x="652.2" y="928" text-anchor="middle" font-family="Liberation Sans" font-size="10.5" fill="#000">11:00-12.00</text><text x="702.4" y="913" text-anchor="middle" font-family="Liberation Sans" font-size="10.5" fill="#000">12:00-13.00</text><text x="752.5" y="928" text-anchor="middle" font-family="Liberation Sans" font-size="10.5" fill="#000">13:00-14.00</text><text x="802.5" y="913" text-anchor="middle" font-family="Liberation Sans" font-size="10.5" fill="#000">14:00-15.00</text><text x="852.6" y="928" text-anchor="middle" font-family="Liberation Sans" font-size="10.5" fill="#000">15:00-16.00</text><text x="902.8" y="913" text-anchor="middle" font-family="Liberation Sans" font-size="10.5" fill="#000">16:00-17.00</text><text x="952.9" y="928" text-anchor="middle" font-family="Liberation Sans" font-size="10.5" fill="#000">17:00-18.00</text><text x="1003.0" y="913" text-anchor="middle" font-family="Liberation Sans" font-size="10.5" fill="#000">18:00-19.00</text><text x="1053.0" y="928" text-anchor="middle" font-family="Liberation Sans" font-size="10.5" fill="#000">19:00-20.00</text><text x="1103.2" y="913" text-anchor="middle" font-family="Liberation Sans" font-size="10.5" fill="#000">20:00-21.00</text><text x="1153.2" y="928" text-anchor="middle" font-family="Liberation Sans" font-size="10.5" fill="#000">21:00-22.00</text><text x="1203.3" y="913" text-anchor="middle" font-family="Liberation Sans" font-size="10.5" fill="#000">22:00-23.00</text><text x="1253.5" y="928" text-anchor="middle" font-family="Liberation Sans" font-size="10.5" fill="#000">23:00-00.00</text><text x="1303.5" y="913" text-anchor="middle" font-family="Liberation Sans" font-size="10.5" fill="#000">00:00-01.00</text><text x="1353.7" y="928" text-anchor="middle" font-family="Liberation Sans" font-size="10.5" fill="#000">01:00-02.00</text><text x="1403.8" y="913" text-anchor="middle" font-family="Liberation Sans" font-size="10.5" fill="#000">02:00-03.00</text><text x="1453.8" y="928" text-anchor="middle" font-family="Liberation Sans" font-size="10.5" fill="#000">03:00-04.00</text><text x="1504.0" y="913" text-anchor="middle" font-family="Liberation Sans" font-size="10.5" fill="#000">04:00-05.00</text><text x="1554.1" y="928" text-anchor="middle" font-family="Liberation Sans" font-size="10.5" fill="#000">05:00-06.00</text><text x="1604.2" y="913" text-anchor="middle" font-family="Liberation Sans" font-size="10.5" fill="#000">06:00-07.00</text><text x="1654.2" y="928" text-anchor="middle" font-family="Liberation Sans" font-size="10.5" fill="#000">07:00-08.00</text></svg></div><div class="a" style="left:0;top:1040px;width:1920px;height:40px;background:#0c0c0c"></div><svg class="a" style="left:16px;top:1052px" width="17" height="17" viewBox="0 0 17 17"><path d="M0 2.4 L7.3 1.4 V8 H0Z M8.2 1.3 L17 0 V8 H8.2Z M0 9 H7.3 V15.6 L0 14.6Z M8.2 9 H17 V17 L8.2 15.7Z" fill="#fff"/></svg><div class="a" style="left:48px;top:1040px;width:344px;height:40px;background:#333333"></div><svg class="a" style="left:59px;top:1051px" width="18" height="18" viewBox="0 0 18 18"><circle cx="10.5" cy="6.5" r="5.3" fill="none" stroke="#fff" stroke-width="1.2"/><path d="M6.7 10.3 L1 16" stroke="#fff" stroke-width="1.3"/></svg><div class="t" style="left:88px;top:1053px;font-size:14.3px;color:#c6c6c6">Type here to search</div><svg class="a" style="left:365px;top:1050px" width="12" height="18" viewBox="0 0 12 18"><rect x="3" y="0.6" width="6" height="11" rx="3" fill="none" stroke="#bdbdbd" stroke-width="1.1"/><path d="M1 8 A5 5 0 0 0 11 8 M6 13 V16.5 M3.5 16.8 H8.5" fill="none" stroke="#bdbdbd" stroke-width="1.1"/></svg><svg class="a" style="left:407px;top:1052px" width="18" height="16" viewBox="0 0 18 16"><rect x="1.5" y="3" width="11" height="9" fill="none" stroke="#fff" stroke-width="1.3"/><path d="M0 0.7 H14 M0 15 H14" stroke="#fff" stroke-width="1.3"/><rect x="15" y="0" width="2" height="2.5" fill="#fff"/><rect x="15" y="4.5" width="2" height="11" fill="#fff"/></svg><svg class="a" style="left:455px;top:1047px" width="26" height="26" viewBox="0 0 26 26"><path d="M1 2 L20 0 L21 16 L2 18Z" fill="#e8eef8"/><path d="M3 3.5 L18.5 2 L19 14 L3.5 15.5Z" fill="#1a4fd6"/><ellipse cx="10" cy="21" rx="6" ry="3" fill="#bfc5cc"/><circle cx="18.5" cy="18.5" r="6" fill="#d8dde0"/><path d="M15.5 18 L18 16 M21.5 19 L19 21" stroke="#2a9d3a" stroke-width="1.6"/></svg><svg class="a" style="left:504px;top:1048px" width="25" height="25" viewBox="0 0 25 25"><path d="M18 0.5 L24.5 3 V21.5 L18 24 Z" fill="#865fc5"/><path d="M0 19.5 L18 24 V20.5 L2 18.5Z" fill="#865fc5"/><path fill-rule="evenodd" d="M0.5 7.5 L3 6.5 L9 11 L18 4 V8 L12 12.2 L18 16.5 V20 L9 13.5 L3 18 L0.5 17 Z M3 9.3 V15.2 L6.8 12.2Z" fill="#865fc5"/></svg><svg class="a" style="left:553px;top:1048px" width="24" height="24" viewBox="0 0 24 24"><circle cx="12" cy="12" r="11.5" fill="#00979c"/><g fill="none" stroke="#fff" stroke-width="1.8"><circle cx="7.8" cy="12" r="3.2"/><circle cx="16.2" cy="12" r="3.2"/></g></svg><svg class="a" style="left:602px;top:1049px" width="24" height="22" viewBox="0 0 24 22"><path d="M0 1.5 H9 L11 3.5 H22 V21 H0Z" fill="#f8c945"/><rect x="0" y="5.5" width="22" height="15.5" fill="#fde28a"/><path d="M6 13 H16 V21 H13 V16 H9 V21 H6Z" fill="#2f9be7"/></svg><div class="a" style="left:639px;top:1040px;width:48px;height:40px;background:#333333"></div><svg class="a" style="left:651px;top:1048px" width="24" height="24" viewBox="0 0 24 24"><circle cx="12" cy="12" r="11.5" fill="#db4437"/><path d="M12 12 L22 6 A11.5 11.5 0 0 1 12 23.5Z" fill="#fcc934"/><path d="M12 12 L12 23.5 A11.5 11.5 0 0 1 2 6Z" fill="#0f9d58"/><path d="M12 12 L2 6 A11.5 11.5 0 0 1 22 6 Z" fill="#db4437"/><circle cx="12" cy="12" r="5.2" fill="#fff"/><circle cx="12" cy="12" r="4.2" fill="#4285f4"/></svg><div class="a" style="left:447px;top:1078px;width:40px;height:2px;background:#9fe3c9"></div><div class="a" style="left:496px;top:1078px;width:40px;height:2px;background:#9fe3c9"></div><div class="a" style="left:545px;top:1078px;width:40px;height:2px;background:#9fe3c9"></div><div class="a" style="left:594px;top:1078px;width:40px;height:2px;background:#9fe3c9"></div><div class="a" style="left:639px;top:1078px;width:48px;height:2px;background:#9fe3c9"></div><div class="a" style="left:687px;top:1040px;width:1px;height:40px;background:#222"></div><svg class="a" style="left:1638px;top:1050px" width="18" height="18" viewBox="0 0 18 18"><g fill="none" stroke="#fff" stroke-width="1.1"><circle cx="11.7" cy="4.4" r="2.5"/><path d="M9.6 9.4 C10.2 8.3 11 7.9 12 7.9 C13.4 7.9 14.3 8.9 14.8 10.6"/><circle cx="6.3" cy="10.5" r="2.5"/><path d="M2.3 17.2 C2.7 15 4.2 13.9 6.3 13.9 C8.4 13.9 9.8 15 10.2 17.2"/></g></svg><svg class="a" style="left:1677px;top:1056px" width="12" height="8" viewBox="0 0 12 8"><path d="M0.5 7.5 L6 1.5 L11.5 7.5" fill="none" stroke="#fff" stroke-width="1.1"/></svg><svg class="a" style="left:1698px;top:1053px" width="18" height="13" viewBox="0 0 18 13"><g fill="none" stroke="#fff" stroke-width="1"><path d="M1.7 1 V4.4 M4.2 1 V4.4 M3 7.8 V12"/><rect x="5.5" y="3.5" width="10" height="8"/></g><path d="M0.8 4.2 H5 V6 A2 2 0 0 1 3 8 A2 2 0 0 1 0.8 6Z" fill="#fff"/><rect x="6.3" y="5.1" width="7.8" height="4.8" fill="#fff"/><rect x="15.5" y="5.5" width="1.3" height="3.6" fill="#fff"/></svg><svg class="a" style="left:1726px;top:1054px" width="14" height="14" viewBox="0 0 14 14"><path d="M0.7 13 A12.3 12.3 0 0 1 13 0.7 M3.2 13 A9.8 9.8 0 0 1 13 3.2 M5.7 13 A7.3 7.3 0 0 1 13 5.7 M8.2 13 A4.8 4.8 0 0 1 13 8.2" fill="none" stroke="#cfcfcf" stroke-width="0.9"/><circle cx="11.6" cy="11.6" r="1.5" fill="#fff"/></svg><svg class="a" style="left:1746px;top:1053px" width="16" height="14" viewBox="0 0 16 14"><path d="M1.2 4.5 H3.3 L7 1 V12.8 L3.3 9.3 H1.2Z" fill="none" stroke="#fff" stroke-width="1.1" stroke-linejoin="round"/><path d="M9.5 4.6 L14.6 9.6 M14.6 4.6 L9.5 9.6" stroke="#fff" stroke-width="1.2"/></svg><div class="t" style="left:1773px;top:1055px;font-size:11.2px;color:#fff">ENG</div><div class="t" style="left:1810px;top:1045.5px;font-size:11.4px;color:#fff">04:38 PM</div><div class="t" style="left:1809px;top:1063px;font-size:11.6px;color:#fff">6/14/2019</div><svg class="a" style="left:1878px;top:1052px" width="18" height="17" viewBox="0 0 18 17"><path d="M0.6 0.6 H17 V12.5 H11 L8.5 15.5 L6 12.5 H0.6Z" fill="none" stroke="#fff" stroke-width="1.1"/></svg><div class="a" style="left:1915px;top:1040px;width:1px;height:40px;background:#555"></div></body></html>
